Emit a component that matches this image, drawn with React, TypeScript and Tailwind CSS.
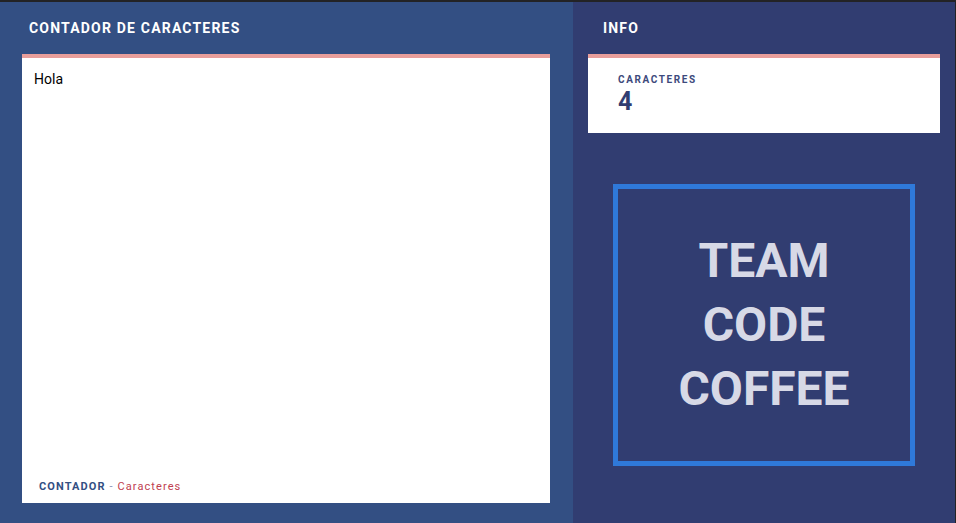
import { useState } from "react";

const App = () => {
  const [text, setText] = useState("Hola");

  return (
    <div className="w-[956px] h-[523px] flex flex-col bg-[#1f1f22] font-['Roboto',sans-serif] overflow-hidden">
      <div className="h-[2px] bg-[#232325]" />
      <div className="flex flex-1">
        {/* contador */}
        <section className="w-[573px] bg-[#334f83] flex flex-col pl-[22px] pr-[23px] pb-[20px]">
          <h1 className="h-[52px] flex items-center pl-[7px] text-white font-bold text-[14px] tracking-[0.085em]">
            CONTADOR DE CARACTERES
          </h1>
          <div className="flex-1 bg-white border-t-4 border-[#e89e9b] flex flex-col">
            <textarea
              value={text}
              onChange={(e) => setText(e.target.value)}
              className="flex-1 resize-none outline-none px-[12px] pt-[11px] text-[14px] text-black font-['Roboto',sans-serif]"
            />
            <p className="pl-[17px] pb-[8px] text-[11px] tracking-[0.1em]">
              <span className="font-bold text-[#334f83]">CONTADOR</span>
              <span className="text-[#8a93b5]"> - </span>
              <span className="text-[#c0404f]">Caracteres</span>
            </p>
          </div>
        </section>

        {/* info */}
        <section className="w-[382px] bg-[#313d71] flex flex-col px-[15px]">
          <h2 className="h-[52px] flex items-center text-white font-bold text-[14px] tracking-[0.085em] pl-[15px]">
            INFO
          </h2>
          <div className="h-[79px] bg-white border-t-4 border-[#e89e9b] pl-[30px] pt-[15px]">
            <p className="text-[10px] font-bold tracking-[0.16em] text-[#3d4a7c] leading-[14px]">
              CARACTERES
            </p>
            <p className="text-[25px] font-bold text-[#313d71] leading-[30px]">
              {text.length}
            </p>
          </div>
          <div className="mt-[51px] mx-auto w-[302px] h-[282px] border-[5px] border-[#2f79d9] flex items-center justify-center">
            <p className="text-center text-[#d7d9e6] font-bold text-[48px] leading-[64px]">
              TEAM
              <br />
              CODE
              <br />
              COFFEE
            </p>
          </div>
        </section>
        <div className="w-[1px] bg-[#232325]" />
      </div>
    </div>
  );
};

export default App;
